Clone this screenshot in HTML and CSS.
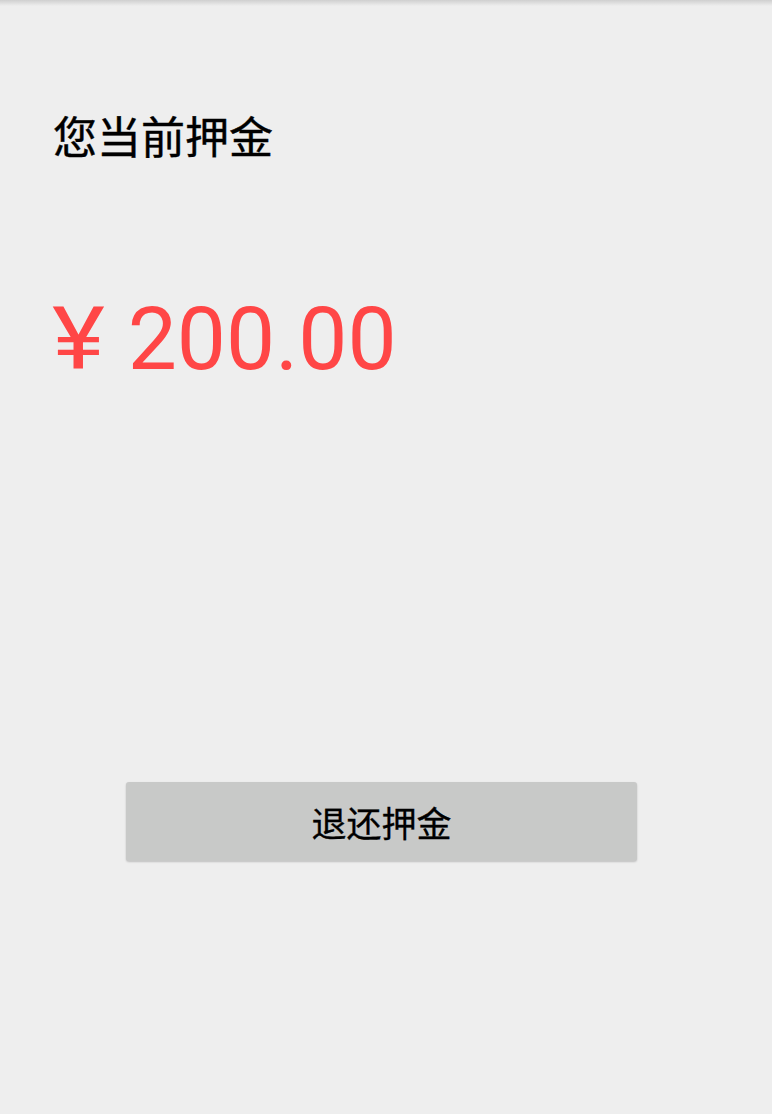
FILE: index.html
```html
<!DOCTYPE html>
<html lang="zh">
<head>
<meta charset="utf-8">
<link rel="stylesheet" href="styles.css">
</head>
<body>
<div class="page">
  <div class="topshadow"></div>
  <div class="label">您当前押金</div>
  <div class="amount"><span class="yen">¥</span> 200.00</div>
  <div class="actions">
    <button class="refund">退还押金</button>
  </div>
</div>
</body>
</html>
```
FILE: styles.css
```css
html, body {
  margin: 0;
  padding: 0;
  background: #eeeeee;
}
.page {
  width: 772px;
  height: 1114px;
  position: relative;
  background: #eeeeee;
  display: flex;
  flex-direction: column;
  font-family: "Noto Sans CJK SC", "Roboto", sans-serif;
}
.topshadow {
  position: absolute;
  left: 0;
  top: 0;
  width: 100%;
  height: 6px;
  background: linear-gradient(#cfcfcf, rgba(238,238,238,0));
}
.label {
  margin: 107px 0 0 53px;
  font-size: 44px;
  line-height: 56px;
  color: #000;
  -webkit-text-stroke: 0.4px #000;
}
.amount {
  margin: 123px 0 0 52px;
  font-family: "Roboto", sans-serif;
  font-size: 87.5px;
  line-height: 106px;
  height: 106px;
  color: #ff4646;
}
.yen {
  display: inline-block;
  transform: scaleX(1.15);
  transform-origin: left center;
  margin-right: 8px;
}
.actions {
  margin-top: 390px;
  display: flex;
  justify-content: flex-start;
  padding-left: 126px;
}
.refund {
  width: 511px;
  height: 79px;
  border: none;
  border-radius: 3px;
  background: #c8c9c8;
  box-shadow: 0 1px 2px rgba(0,0,0,0.2);
  font-family: "Noto Sans CJK SC", sans-serif;
  font-size: 35px;
  color: #000;
  -webkit-text-stroke: 0.3px #000;
  padding: 0;
}
```
